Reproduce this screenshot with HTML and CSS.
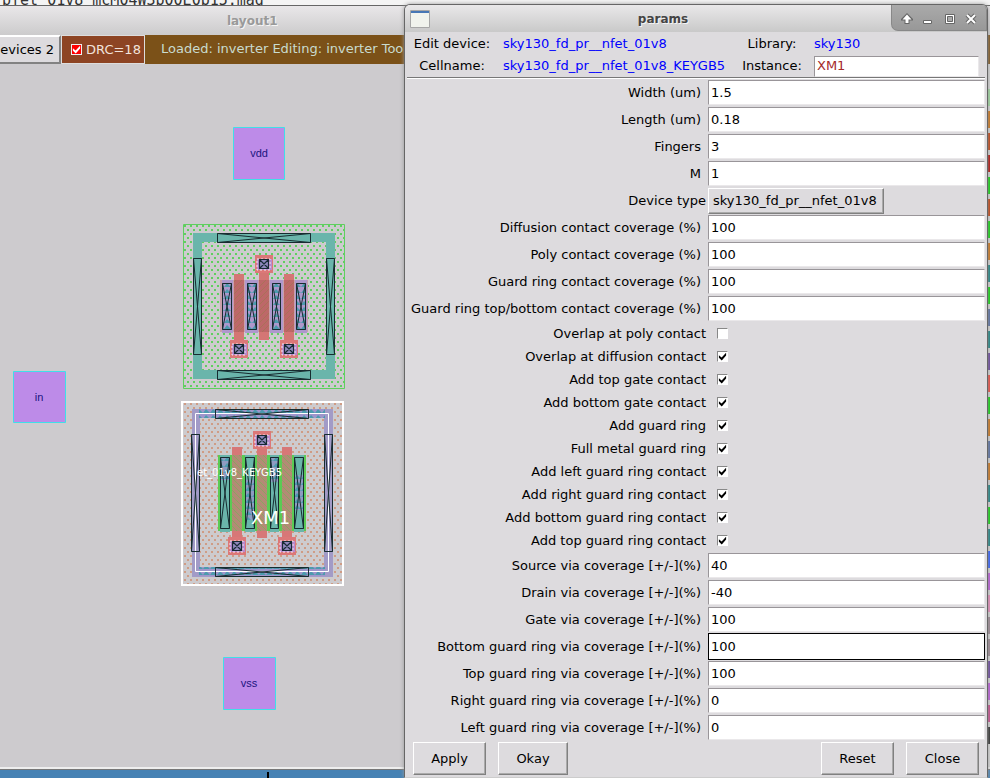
FILE: index.html
```html
<!DOCTYPE html>
<html lang="en">
<head>
<meta charset="utf-8">
<title>layout1</title>
<link rel="stylesheet" href="styles.css">
</head>
<body>
<div class="terminal">pfet_01v8_mcM04W3b00E0b15.mag</div>
<main class="layout-window">
  <header class="layout-title">layout1</header>
  <div class="toolbar">
    <button class="devices" type="button">Devices 2</button>
    <label class="drc"><input class="drc-check" type="checkbox" checked>DRC=18</label>
    <div class="message">Loaded: inverter Editing: inverter Tool: box</div>
  </div>
  <div class="work">
    <div class="canvas">
    <svg width="404" height="703" viewBox="0 64 404 703" role="img" aria-label="Inverter layout">
      <defs>
        <pattern id="well" x="183" y="224" width="6" height="8" patternUnits="userSpaceOnUse"><path d="M1 1h2v2h-2zM4 5h2v2h-2z" fill="#5fcf5f"/></pattern>
        <pattern id="sub" x="183" y="402" width="6" height="8" patternUnits="userSpaceOnUse"><path d="M1 1h2v2h-2zM4 5h2v2h-2z" fill="#cf9c85"/></pattern>
        <pattern id="metal" width="7" height="6" patternUnits="userSpaceOnUse"><path d="M0 5l3-4 4 4z" fill="#4c9aae"/></pattern>
        <pattern id="hatch" width="6" height="6" patternUnits="userSpaceOnUse"><path d="M0 6l6-6" stroke="#aa7158"/></pattern>
        <pattern id="hatchGreen" width="6" height="6" patternUnits="userSpaceOnUse"><path d="M0 0l6 6" stroke="#7fac5c" stroke-width=".8"/></pattern>
        <symbol id="via" viewBox="0 0 18 18"><path d="M0 0h18v18H0z" fill="#dc7878"/><path d="M2 4h15v11H2z" fill="#b88ace"/><path d="M2 4h13v11H2z" fill="none" stroke="#f4eaf2" stroke-dasharray="2 2"/><path d="M4.500 4.500h9v9h-9zM4.500 4.500l9 9M13.500 4.500l-9 9" fill="#8f88bd" stroke="#182b35" stroke-width="1.200"/></symbol>
      </defs>
      <g class="pads">
        <path d="M233.500 127.500h51v52h-51zM13.500 371.500h52v51h-52zM223.500 657.500h52v52h-52z"/>
        <text x="259" y="157">vdd</text><text x="39" y="401">in</text><text x="249" y="687">vss</text>
      </g>
      <g>
        <path d="M183.500 224.500h161v164h-161z" fill="url(#well)" stroke="#5fcf5f"/>
        <path d="M193 233h142v146H193zM202 242v128h124V242z" fill="#6ab5ab" fill-rule="evenodd"/>
        <path d="M220 280h88v52h-88z" fill="#c9a0aa"/>
        <path d="M222 280h11v53h-11zM245 280h13v53h-13zM270 280h13v53h-13zM295 280h12v53h-12z" fill="#ae98cc"/>
        <path d="M222 284h10v46h-10zM247 284h10v46h-10zM272 284h9v46h-9zM296 284h10v46h-10z" fill="url(#metal)"/>
        <path d="M234 274h10v67h-10zM259 271h10v69h-10zM284 274h10v67h-10z" fill="#d47674"/>
        <path d="M234 280h10v52h-10zM259 280h10v52h-10zM284 280h10v52h-10z" fill="#bd6868"/>
        <path d="M234 280h10v52h-10zM259 280h10v52h-10zM284 280h10v52h-10z" fill="url(#hatch)"/>
        <g class="contacts"><path d="M217.500 233.500h93v9h-93zl93 9M310.500 233.500l-93 9M217.500 370.500h93v9h-93zl93 9M310.500 370.500l-93 9M193.500 258.500h8v96h-8zl8 96M201.500 258.500l-8 96M326.500 258.500h8v96h-8zl8 96M334.500 258.500l-8 96"/>
        <path d="M222.500 283.500h9v46h-9zl9 46M231.500 283.500l-9 46M247.500 283.500h9v46h-9zl9 46M256.500 283.500l-9 46M272.500 283.500h8v46h-8zl8 46M280.500 283.500l-8 46M296.500 283.500h9v46h-9zl9 46M305.500 283.500l-9 46"/></g>
        <use href="#via" x="255" y="255" width="18" height="18"/><use href="#via" x="230" y="340" width="18" height="18"/><use href="#via" x="280" y="340" width="18" height="18"/>
      </g>
      <g>
        <path d="M182 402h161v183H182z" fill="url(#sub)" stroke="#fff" stroke-width="2"/>
        <path d="M192 409h141v168H192zM200 418v149h124V418z" fill="#a29bc7" fill-rule="evenodd"/>
        <path d="M199 409h126v9H199zM199 567h126v9H199z" fill="#9f95cb"/>
        <path d="M199 409h126v9H199zM199 567h126v9H199z" fill="url(#metal)"/>
        <path d="M218 455h88v76h-88z" fill="#5acb54"/>
        <path d="M220 455h10v77h-10zM245 455h10v77h-10zM270 455h9v77h-9zM294 455h10v77h-10z" fill="#6ab5ab"/>
        <path d="M220 458h10v22h-10zM245 480h10v40h-10zM270 458h9v24h-9zM294 475h10v35h-10z" fill="#8f9bc2"/>
        <path d="M220 458h10v22h-10zM245 480h10v40h-10zM270 458h9v24h-9zM294 475h10v35h-10z" fill="url(#metal)"/>
        <path d="M232 447h10v92h-10zM257 447h10v91h-10zM282 447h10v92h-10z" fill="#d77777"/>
        <path d="M232 455h10v76h-10zM257 455h10v76h-10zM282 455h10v76h-10z" fill="#b38b75"/>
        <path d="M232 455h10v76h-10zM257 455h10v76h-10zM282 455h10v76h-10z" fill="url(#hatchGreen)"/>
        <path d="M195.500 413.500h133v158h-133z" fill="none" stroke="#fff"/>
        <g class="contacts"><path d="M215.500 409.500h93v9h-93zl93 9M308.500 409.500l-93 9M215.500 567.500h93v9h-93zl93 9M308.500 567.500l-93 9M191.500 434.500h8v117h-8zl8 117M199.500 434.500l-8 117M324.500 434.500h8v117h-8zl8 117M332.500 434.500l-8 117"/>
        <path d="M220.500 457.500h9v71h-9zl9 71M229.500 457.500l-9 71M245.500 457.500h9v71h-9zl9 71M254.500 457.500l-9 71M270.500 457.500h8v71h-8zl8 71M278.500 457.500l-8 71M294.500 457.500h9v71h-9zl9 71M303.500 457.500l-9 71"/></g>
        <use href="#via" x="253" y="431" width="18" height="18"/><use href="#via" x="228" y="537" width="18" height="18"/><use href="#via" x="278" y="537" width="18" height="18"/>
        <text class="cell-name" x="197" y="476">et_01v8_KEYGB5</text>
        <text class="cell-id" x="251" y="524">XM1</text>
      </g>
    </svg>
    </div>
    <div class="palette">
      <i class="light-green"></i><i class="orange"></i><i class="rust"></i><i class="red"></i><i class="green"></i><i class="rust"></i><i class="green"></i><i class="orange"></i><i class="teal"></i><i class="green"></i><i class="slate"></i><i class="teal"></i><i class="purple"></i><i class="coral"></i><i class="green"></i><i class="orange"></i><i class="slate"></i><i class="orange"></i><i class="teal"></i><i class="green"></i><i class="teal"></i><i class="blue"></i><i class="violet"></i><i class="pink"></i><i class="gray"></i><i class="gray"></i><i class="purple"></i><i class="violet"></i><i class="magenta"></i><i class="dark"></i>
    </div>
  </div>
  <footer class="scroll-strip"><span class="marker"></span></footer>
</main>

<section class="params" aria-label="params">
  <header class="params-title">
    <svg class="app-icon" width="20" height="18" viewBox="0 0 20 18"><path d="M.5.500h19v17H.5z" fill="#f1f3ed" stroke="#a7a7a7"/><path d="M1 1h18v2H1z" fill="#4777b5"/></svg>
    <h1>params</h1>
    <div class="controls">
      <button type="button" aria-label="Shade"><svg width="12" height="12" viewBox="0 0 12 12"><path d="M6 0l6 6v1.500H8.500V11h-5V7.500H0V6z" fill="#666"/><path d="M6 1.500l4.500 5H7.500V10h-3V6.500h-3z" fill="#fff"/></svg></button>
      <button type="button" aria-label="Minimize"><svg width="12" height="12" viewBox="0 0 12 12"><path d="M1.500 7.500h8v3h-8z" fill="#fff" stroke="#666"/></svg></button>
      <button type="button" aria-label="Maximize"><svg width="12" height="12" viewBox="0 0 12 12"><path d="M1.500 1.500h9v9h-9z" fill="#fff" stroke="#666"/><path d="M3.500 3.500h5v5h-5z" fill="#aaa" stroke="#666"/></svg></button>
      <button type="button" aria-label="Close window"><svg width="12" height="12" viewBox="0 0 12 12"><path d="M2 2l8 8M10 2l-8 8" stroke="#666" stroke-width="4"/><path d="M2 2l8 8M10 2l-8 8" stroke="#fff" stroke-width="2"/></svg></button>
    </div>
  </header>
  <div class="identity">
    <span class="caption">Edit device:</span><span class="value">sky130_fd_pr__nfet_01v8</span><span class="caption">Library:</span><span class="value">sky130</span>
    <span class="caption">Cellname:</span><span class="value">sky130_fd_pr__nfet_01v8_KEYGB5</span><label class="caption" for="instance">Instance:</label><input class="field instance" id="instance" value="XM1">
  </div>
  <form>
    <div class="row"><label for="width">Width (um)</label><input class="field" id="width" value="1.5"></div>
    <div class="row"><label for="length">Length (um)</label><input class="field" id="length" value="0.18"></div>
    <div class="row"><label for="fingers">Fingers</label><input class="field" id="fingers" value="3"></div>
    <div class="row"><label for="m">M</label><input class="field" id="m" value="1"></div>
    <div class="row choice"><label for="type">Device type</label><select class="raised" id="type"><option>sky130_fd_pr__nfet_01v8</option></select></div>
    <div class="row"><label for="diff">Diffusion contact coverage (%)</label><input class="field" id="diff" value="100"></div>
    <div class="row"><label for="poly">Poly contact coverage (%)</label><input class="field" id="poly" value="100"></div>
    <div class="row"><label for="ring">Guard ring contact coverage (%)</label><input class="field" id="ring" value="100"></div>
    <div class="row"><label for="ringtb">Guard ring top/bottom contact coverage (%)</label><input class="field" id="ringtb" value="100"></div>
    <div class="row check"><label for="c1">Overlap at poly contact</label><input id="c1" type="checkbox"></div>
    <div class="row check"><label for="c2">Overlap at diffusion contact</label><input id="c2" type="checkbox" checked></div>
    <div class="row check"><label for="c3">Add top gate contact</label><input id="c3" type="checkbox" checked></div>
    <div class="row check"><label for="c4">Add bottom gate contact</label><input id="c4" type="checkbox" checked></div>
    <div class="row check"><label for="c5">Add guard ring</label><input id="c5" type="checkbox" checked></div>
    <div class="row check"><label for="c6">Full metal guard ring</label><input id="c6" type="checkbox" checked></div>
    <div class="row check"><label for="c7">Add left guard ring contact</label><input id="c7" type="checkbox" checked></div>
    <div class="row check"><label for="c8">Add right guard ring contact</label><input id="c8" type="checkbox" checked></div>
    <div class="row check"><label for="c9">Add bottom guard ring contact</label><input id="c9" type="checkbox" checked></div>
    <div class="row check"><label for="c10">Add top guard ring contact</label><input id="c10" type="checkbox" checked></div>
    <div class="row"><label for="source">Source via coverage [+/-](%)</label><input class="field" id="source" value="40"></div>
    <div class="row"><label for="drain">Drain via coverage [+/-](%)</label><input class="field" id="drain" value="-40"></div>
    <div class="row"><label for="gate">Gate via coverage [+/-](%)</label><input class="field" id="gate" value="100"></div>
    <div class="row"><label for="bottom">Bottom guard ring via coverage [+/-](%)</label><input class="field active" id="bottom" value="100"></div>
    <div class="row"><label for="top">Top guard ring via coverage [+/-](%)</label><input class="field" id="top" value="100"></div>
    <div class="row"><label for="right">Right guard ring via coverage [+/-](%)</label><input class="field" id="right" value="0"></div>
    <div class="row"><label for="left">Left guard ring via coverage [+/-](%)</label><input class="field" id="left" value="0"></div>
    <div class="actions">
      <button class="raised" type="button">Apply</button><button class="raised okay" type="button">Okay</button><button class="raised reset" type="button">Reset</button><button class="raised" type="button">Close</button>
    </div>
  </form>
</section>
</body>
</html>
```
FILE: styles.css
```css
* { box-sizing: border-box; }
body {
  margin: 0;
  height: 100vh;
  overflow: hidden;
  display: flex;
  flex-direction: column;
  position: relative;
  font: 13px/18px "DejaVu Sans", sans-serif;
  color: #000;
  background: #f4f4f4;
}
button, input, select { font: inherit; color: inherit; border-radius: 0; margin: 0; }

.terminal {
  flex: none;
  height: 5px;
  display: flex;
  align-items: flex-end;
  padding-left: 2px;
  overflow: hidden;
  font: 15px/10px "DejaVu Sans Mono", monospace;
  color: #333;
}
.layout-window { flex: 1; min-height: 0; display: flex; flex-direction: column; background: #cdcbce; }
.layout-title {
  flex: none;
  height: 30px;
  border-top: 1px solid #666;
  padding-left: 227px;
  background: linear-gradient(#e9e7e9, #cccbcc);
  font-size: 12px;
  font-weight: bold;
  line-height: 30px;
  color: #999;
  text-shadow: 1px 1px #f5f5f5;
}
.toolbar { flex: none; height: 29px; display: flex; background: #7b5118; }
.devices {
  width: 61px;
  display: flex;
  justify-content: flex-end;
  align-items: center;
  overflow: hidden;
  padding: 0 5px 0 0;
  border: 2px solid;
  border-color: #fff #828282 #828282 #fff;
  border-left: 0;
  background: #dddbde;
  white-space: nowrap;
}
.drc {
  display: flex;
  align-items: center;
  gap: 4px;
  width: 84px;
  padding-left: 9px;
  border: 1px solid #ddd;
  background: #8d4423;
  color: #f2e3dc;
  white-space: nowrap;
}
input[type="checkbox"] {
  appearance: none;
  flex: none;
  width: 11px;
  height: 11px;
  border: 1px solid;
  border-color: #888 #fff #fff #888;
  background: #fff;
}
input[type="checkbox"]:checked::after {
  content: "";
  display: block;
  height: 9px;
  background: #000;
  clip-path: polygon(10% 35%, 40% 62%, 90% 8%, 90% 40%, 42% 95%, 10% 65%);
}
input.drc-check[type="checkbox"] { border-color: #eee; background: #f00; }
input.drc-check[type="checkbox"]:checked::after { background: #fff; }
.message { flex: 1; padding-left: 16px; line-height: 28px; color: #c9dccf; white-space: nowrap; overflow: hidden; }
.work { flex: 1; min-height: 0; display: flex; overflow: hidden; }
.canvas { flex: 1; }
.canvas svg { display: block; }
.pads path { fill: #bd8be8; stroke: #40dfe8; }
.pads text { font: 11px "Liberation Sans", sans-serif; fill: #1b1480; text-anchor: middle; }
.contacts { fill: none; stroke: #172c30; stroke-width: 1; }
.cell-name { font-size: 10px; fill: #fff; }
.cell-id { font-size: 18px; fill: #fff; }
.palette { width: 24px; padding-top: 25px; display: flex; flex-direction: column; gap: 5px; background: #d5d5d5; }
.palette i { flex: none; height: 17px; }
.light-green { background: #9bd99b; }
.orange { background: #cc7011; }
.rust { background: #c13c08; }
.red { background: #b00800; }
.green { background: #05d605; }
.teal { background: #158080; }
.slate { background: #536ba0; }
.purple { background: #65409b; }
.coral { background: #ee4438; }
.blue { background: #285aff; }
.violet { background: #bb55dd; }
.pink { background: #e988b9; }
.gray { background: #99858f; }
.magenta { background: #c64688; }
.dark { background: #292929; }
.scroll-strip { flex: none; height: 11px; border-top: 2px solid #eee; background: #4682b4; padding: 3px 0 0 267px; box-shadow: inset 0 1px #777; }
.marker { display: block; width: 2px; height: 6px; background: #000; }

.params {
  position: absolute;
  top: 4px;
  right: 2px;
  bottom: 0;
  left: 404px;
  border: 1px solid #666;
  border-bottom-color: #ccc;
  border-radius: 6px 6px 0 0;
  padding: 0 2px;
  background: #dddbde;
  box-shadow: 0 0 4px #999;
}
.params-title {
  height: 27px;
  display: flex;
  align-items: center;
  margin: 0 -2px;
  padding-left: 5px;
  border-radius: 5px 5px 0 0;
  background: linear-gradient(#e9e8e9, #c9c9c9);
}
.params-title h1 { flex: 1; margin: 0; padding-left: 5px; text-align: center; font-size: 12px; line-height: 18px; color: #444; text-shadow: 1px 1px #f5f5f5; }
.controls { align-self: flex-start; width: 96px; height: 26px; display: flex; align-items: center; justify-content: space-around; padding: 2px 4px 0; border-radius: 0 5px 0 7px; background: linear-gradient(#aaa, #989898); border: 1px solid #888; border-top: 0; }
.controls button { border: 0; padding: 0; background: none; display: flex; }
.identity {
  display: grid;
  grid-template-columns: 78px 1fr 60px 165px;
  grid-template-rows: 22px 22px;
  align-items: center;
  column-gap: 12px;
  padding: 1px 6px 0;
  border-bottom: 1px solid #777;
  box-shadow: 0 1px #fff;
  white-space: nowrap;
}
.caption { text-align: center; justify-self: center; }
.value { color: #00f; }
.field {
  width: 100%;
  height: 25px;
  padding: 0 0 1px 2px;
  border: 1px solid;
  border-color: #999599 #eae8ea #eae8ea #999599;
  background: #fff;
  outline: 0;
}
.instance { height: 21px; border-width: 1px; color: #a52a2a; }
.active { height: 27px; border-color: #000; }
form { padding-top: 1px; }
.row { height: 27px; display: grid; grid-template-columns: 301px 1fr; align-items: center; }
.row label { padding-right: 7px; text-align: right; white-space: nowrap; }
.choice label, .check label { padding-right: 2px; }
.check { height: 23px; }
.check input { margin-left: 9px; }
.raised { border: 1px solid; border-color: #fff #808080 #808080 #fff; box-shadow: inset -1px -1px #aaa; background: #dddbde; padding: 0; }
select.raised { appearance: none; justify-self: start; height: 26px; padding: 0 6px 0 4px; }
.actions { display: flex; gap: 12px; padding: 1px 6px 0; }
.actions .raised { width: 73px; height: 33px; }
.actions .okay { width: 70px; }
.actions .reset { margin-left: auto; }
```
